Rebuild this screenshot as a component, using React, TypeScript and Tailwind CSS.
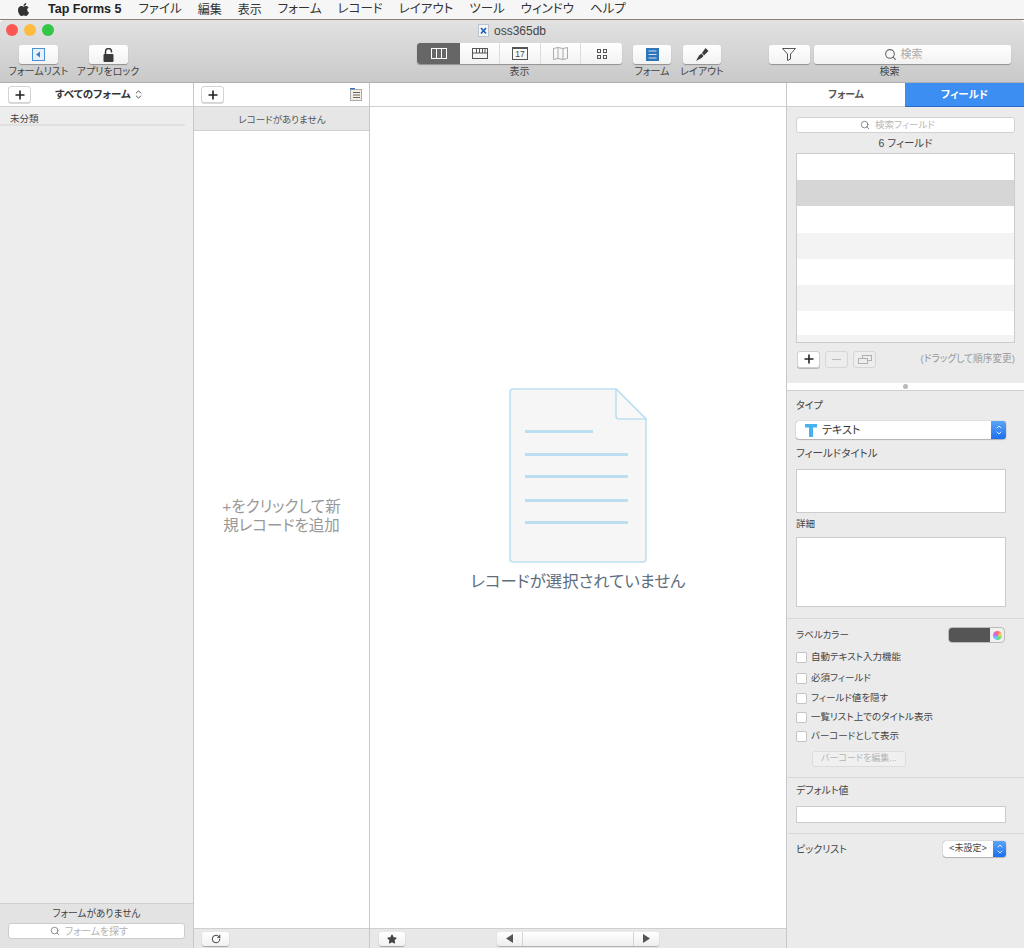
import React from "react";
import { FaApple, FaStar } from "react-icons/fa";
import { RotateCw, Search, ChevronsUpDown, ChevronUp, ChevronDown } from "lucide-react";

const font = "font-['Liberation_Sans','Noto_Sans_CJK_JP',sans-serif] [font-feature-settings:'palt']";

function Btn({ className = "", children }: { className?: string; children?: React.ReactNode }) {
  return (
    <div className={"flex items-center justify-center bg-gradient-to-b from-white to-[#f2f2f2] rounded-[3px] shadow-[0_1px_1px_rgba(0,0,0,0.3)] " + className}>
      {children}
    </div>
  );
}

function Plus({ c = "#222" }: { c?: string }) {
  return (
    <svg width="10" height="10" viewBox="0 0 10 10">
      <path d="M5 0.5V9.5M0.5 5H9.5" stroke={c} strokeWidth="1.6" />
    </svg>
  );
}

function Tool({ label, ml, w, children }: { label: string; ml: string; w: string; children: React.ReactNode }) {
  return (
    <div className={"flex flex-col items-center shrink-0 " + ml + " " + w}>
      <div className="h-[21px] flex items-end w-full justify-center">{children}</div>
      <div className="mt-[2px] text-[10px] leading-[12px] text-[#444] whitespace-nowrap">{label}</div>
    </div>
  );
}

function Seg({ w, active, children, last }: { w: string; active?: boolean; last?: boolean; children: React.ReactNode }) {
  return (
    <div className={"h-full flex items-center justify-center " + w + " " + (active ? "bg-[#666666]" : "") + " " + (last || active ? "" : "border-r border-[#dcdcdc]")}>
      {children}
    </div>
  );
}

function Check({ label, mt }: { label: string; mt: string }) {
  return (
    <div className={"flex items-center ml-[9px] h-[12px] " + mt}>
      <div className="w-[11px] h-[11px] bg-white rounded-[2px] border border-[#c4c4c4] shrink-0" />
      <span className="ml-[4px] text-[9.5px] text-[#444] whitespace-nowrap">{label}</span>
    </div>
  );
}

function Stepper({ w }: { w: string }) {
  return (
    <div className={"h-full flex flex-col items-center justify-center rounded-r-[3px] bg-gradient-to-b from-[#5aa5f8] to-[#1b6ff0] shrink-0 " + w}>
      <ChevronUp size={8} color="#fff" strokeWidth={2.5} className="-mb-[1px]" />
      <ChevronDown size={8} color="#fff" strokeWidth={2.5} className="-mt-[1px]" />
    </div>
  );
}

export default function App() {
  const menus = [
    { t: "ファイル", c: "" },
    { t: "編集", c: "text-[12px]" },
    { t: "表示", c: "text-[12px]" },
    { t: "フォーム", c: "" },
    { t: "レコード", c: "" },
    { t: "レイアウト", c: "" },
    { t: "ツール", c: "" },
    { t: "ウィンドウ", c: "" },
    { t: "ヘルプ", c: "" },
  ];
  return (
    <div className={"w-[1024px] h-[948px] overflow-hidden flex flex-col bg-white " + font}>
      {/* Menu bar */}
      <div className="h-[19px] bg-[#f6f6f6] flex items-center shrink-0 text-[12.5px] text-[#333]">
        <FaApple size={15} color="#333" className="ml-[16px] -mt-[1px]" />
        <span className="ml-[17px] font-bold text-[#222] text-[12.5px]">Tap Forms 5</span>
        <div className="flex items-center ml-[17px] gap-[16px]">
          {menus.map((m) => (
            <span key={m.t} className={"whitespace-nowrap " + m.c}>{m.t}</span>
          ))}
        </div>
      </div>
      <div className="h-px bg-[#8a7f78] shrink-0" />

      {/* Toolbar */}
      <div className="h-[63px] shrink-0 bg-gradient-to-b from-[#e2e2e2] to-[#c9c9c9] border-b border-[#b0b0b0] flex flex-col rounded-t-[4px]">
        <div className="h-[23px] relative flex justify-center shrink-0">
          <div className="absolute left-[6px] top-[4px] flex gap-[6px]">
            <div className="w-[12px] h-[12px] rounded-full bg-[#fc5753]" />
            <div className="w-[12px] h-[12px] rounded-full bg-[#fdbc40]" />
            <div className="w-[12px] h-[12px] rounded-full bg-[#33c748]" />
          </div>
          <div className="flex items-center h-[20px] pt-[1px]">
            <svg width="11" height="13" viewBox="0 0 11 13">
              <rect x="0.5" y="0.5" width="10" height="12" fill="#f4f6f8" stroke="#b9c4cf" />
              <path d="M3 4L8 9.5M8 4L3 9.5" stroke="#1e5fb4" strokeWidth="1.7" />
            </svg>
            <span className="ml-[5px] text-[12px] text-[#444]">oss365db</span>
          </div>
        </div>
        <div className="flex h-[36px]">
          <Tool label="フォームリスト" ml="ml-[4px]" w="w-[69px]">
            <Btn className="w-[39px] h-[19px]">
              <svg width="13" height="13" viewBox="0 0 13 13">
                <rect x="0.5" y="0.5" width="12" height="12" fill="#e6f1fb" stroke="#4a90d6" />
                <path d="M8 3.5V9.5L4 6.5Z" fill="#3e7fc4" />
              </svg>
            </Btn>
          </Tool>
          <Tool label="アプリをロック" ml="ml-[0px]" w="w-[70px]">
            <Btn className="w-[39px] h-[19px]">
              <svg width="11" height="14" viewBox="0 0 11 14">
                <path d="M2.5 6V3.5a3 3 0 0 1 6 0V4.5" fill="none" stroke="#3a3a3a" strokeWidth="1.5" />
                <rect x="0.5" y="6" width="10" height="8" rx="1" fill="#3a3a3a" />
              </svg>
            </Btn>
          </Tool>
          <Tool label="表示" ml="ml-[274px]" w="w-[205px]">
            <Btn className="w-[205px] h-[21px] overflow-hidden !justify-start">
              <Seg w="w-[43px]" active>
                <svg width="16" height="11" viewBox="0 0 16 11" fill="none" stroke="#fff" strokeWidth="1">
                  <rect x="0.5" y="0.5" width="15" height="10" />
                  <path d="M5.5 0.5V10.5M10.5 0.5V10.5" />
                </svg>
              </Seg>
              <Seg w="w-[40px]">
                <svg width="16" height="11" viewBox="0 0 16 11" fill="none" stroke="#555" strokeWidth="1">
                  <rect x="0.5" y="0.5" width="15" height="10" />
                  <path d="M0.5 5H4.5V0.5M4.5 5H15.5M7.5 0.5V5M10.5 0.5V5M13 0.5V5" />
                </svg>
              </Seg>
              <Seg w="w-[41px]">
                <div className="relative w-[16px] h-[13px] border border-[#555] border-t-2 flex items-center justify-center text-[8.5px] leading-none text-[#444]">17</div>
              </Seg>
              <Seg w="w-[40px]">
                <svg width="15" height="13" viewBox="0 0 15 13" fill="none" stroke="#aaa" strokeWidth="1">
                  <path d="M0.5 1.5L5 0.5L10 1.5L14.5 0.5V11.5L10 12.5L5 11.5L0.5 12.5Z" />
                  <path d="M5 0.5V11.5M10 1.5V12.5" />
                </svg>
              </Seg>
              <Seg w="w-[41px]" last>
                <svg width="10" height="10" viewBox="0 0 10 10" fill="none" stroke="#555" strokeWidth="1">
                  <rect x="0.5" y="0.5" width="3" height="3" />
                  <rect x="6.5" y="0.5" width="3" height="3" />
                  <rect x="0.5" y="6.5" width="3" height="3" />
                  <rect x="6.5" y="6.5" width="3" height="3" />
                </svg>
              </Seg>
            </Btn>
          </Tool>
          <Tool label="フォーム" ml="ml-[5px]" w="w-[50px]">
            <Btn className="w-[38px] h-[19px]">
              <svg width="13" height="13" viewBox="0 0 13 13">
                <rect width="13" height="13" fill="#2e74b9" />
                <path d="M2.5 3H10.5M2.5 6.5H10.5M2.5 10H10.5" stroke="#cfe3f5" strokeWidth="1" />
              </svg>
            </Btn>
          </Tool>
          <Tool label="レイアウト" ml="ml-[0px]" w="w-[50px]">
            <Btn className="w-[38px] h-[19px]">
              <svg width="14" height="15" viewBox="0 0 14 15">
                <path d="M1 14L4 8.5L6.5 6.5L8.5 9L6.5 11Z" fill="#3c3c3c" />
                <path d="M7 6L9 8.5L13.5 4L10.5 1Z" fill="#3c3c3c" />
              </svg>
            </Btn>
          </Tool>
          <Tool label="検索" ml="ml-[41px]" w="w-[243px]">
            <div className="flex gap-[4px] items-end">
              <Btn className="w-[41px] h-[19px]">
                <svg width="14" height="13" viewBox="0 0 14 13" fill="none" stroke="#555" strokeWidth="1">
                  <path d="M0.5 0.5H13.5L8.5 6V11L5.5 12.5V6Z" />
                </svg>
              </Btn>
              <Btn className="w-[197px] h-[19px] pr-[18px]">
                <Search size={13} color="#666" />
                <span className="ml-[4px] text-[11px] text-[#aaa]">検索</span>
              </Btn>
            </div>
          </Tool>
        </div>
      </div>

      {/* Body */}
      <div className="flex-1 flex min-h-0">
        {/* Forms column */}
        <div className="w-[194px] shrink-0 flex flex-col border-r border-[#c8c8c8] bg-[#ededed]">
          <div className="h-[24px] bg-white border-b border-[#d0d0d0] flex items-center shrink-0">
            <div className="ml-[8px] w-[23px] h-[17px] bg-white rounded-[3px] border border-[#d4d4d4] shadow-[0_1px_0_rgba(0,0,0,0.15)] flex items-center justify-center">
              <Plus />
            </div>
            <span className="ml-[24px] text-[10.5px] font-bold text-[#333] whitespace-nowrap">すべてのフォーム</span>
            <ChevronsUpDown size={11} color="#444" className="ml-[2px]" />
          </div>
          <div className="flex-1">
            <div className="pl-[10px] pt-[8px] h-[19px] mr-[8px] border-b-2 border-[#e0e0e0] flex items-center text-[9.5px] text-[#444]">未分類</div>
          </div>
          <div className="h-[45px] shrink-0 bg-[#e3e3e3] border-t border-[#cfcfcf] flex flex-col items-center">
            <div className="mt-[4px] text-[9.7px] leading-[12px] text-[#444]">フォームがありません</div>
            <div className="mt-[3px] w-[177px] h-[16px] bg-white rounded-[3px] border border-[#cdcdcd] flex items-center justify-center pr-[15px]">
              <Search size={10} color="#777" />
              <span className="ml-[5px] text-[10px] text-[#b4b4b4]">フォームを探す</span>
            </div>
          </div>
        </div>

        {/* Records column */}
        <div className="w-[176px] shrink-0 flex flex-col border-r border-[#c8c8c8] bg-white">
          <div className="h-[24px] border-b border-[#d0d0d0] flex items-center justify-between shrink-0 pl-[7px] pr-[7px]">
            <div className="w-[23px] h-[17px] bg-white rounded-[3px] border border-[#d4d4d4] shadow-[0_1px_0_rgba(0,0,0,0.15)] flex items-center justify-center">
              <Plus />
            </div>
            <svg width="12" height="13" viewBox="0 0 12 13" fill="none">
              <rect x="0.5" y="1.5" width="11" height="11" fill="#f3efe4" stroke="#aaa" />
              <path d="M0 0.5H5" stroke="#2d6fc4" strokeWidth="1.5" />
              <path d="M3 4.5H10M3 7H10M3 9.5H10" stroke="#666" />
            </svg>
          </div>
          <div className="h-[24px] pt-[3px] pl-[1px] shrink-0 bg-[#e6e6e6] border-b border-[#d0d0d0] flex items-center justify-center text-[9.5px] text-[#555]">
            レコードがありません
          </div>
          <div className="flex-1 flex items-center justify-center">
            <div className="w-[128px] text-center text-[15.5px] leading-[19px] text-[#999] mt-[-27px]">
              +をクリックして新規レコードを追加
            </div>
          </div>
          <div className="h-[20px] shrink-0 bg-[#e8e8e8] border-t border-[#cfcfcf] flex items-center pl-[8px]">
            <Btn className="w-[27px] h-[14px]">
              <RotateCw size={10} color="#333" strokeWidth={2.2} />
            </Btn>
          </div>
        </div>

        {/* Detail column */}
        <div className="w-[416px] shrink-0 flex flex-col bg-white">
          <div className="h-[24px] border-b border-[#d0d0d0] shrink-0" />
          <div className="flex-1 flex flex-col items-center">
            <svg width="138" height="176" viewBox="0 0 138 176" className="mt-[281px] shrink-0" fill="none">
              <path d="M4 1H107L137 31V171a3 3 0 0 1-3 3H4a3 3 0 0 1-3-3V4a3 3 0 0 1 3-3Z" fill="#f6f6f6" stroke="#bfe0f1" strokeWidth="1.6" />
              <path d="M107 1V28a3 3 0 0 0 3 3H137Z" fill="#f8f8f8" stroke="#bfe0f1" strokeWidth="1.6" />
              <path d="M16 43.5H84M16 66.5H119M16 88.5H119M16 112.5H119M16 134.5H119" stroke="#bbdff0" strokeWidth="3" />
            </svg>
            <div className="mt-[7px] text-[16.4px] leading-[20px] text-[#5e6e7e] whitespace-nowrap">レコードが選択されていません</div>
          </div>
          <div className="h-[20px] shrink-0 bg-[#e8e8e8] border-t border-[#cfcfcf] flex items-center pl-[9px]">
            <Btn className="w-[26px] h-[14px]">
              <FaStar size={10} color="#444" />
            </Btn>
            <div className="ml-[92px] w-[162px] h-[14px] flex items-center justify-between rounded-[3px] bg-gradient-to-b from-white to-[#eeeeee] shadow-[0_1px_1px_rgba(0,0,0,0.25)]">
              <div className="w-[26px] h-full flex items-center justify-center border-r border-[#d4d4d4]">
                <svg width="7" height="9" viewBox="0 0 7 9"><path d="M7 0V9L0 4.5Z" fill="#555" /></svg>
              </div>
              <div className="w-[26px] h-full flex items-center justify-center border-l border-[#d4d4d4]">
                <svg width="7" height="9" viewBox="0 0 7 9"><path d="M0 0V9L7 4.5Z" fill="#555" /></svg>
              </div>
            </div>
          </div>
        </div>

        {/* Inspector */}
        <div className="flex-1 flex flex-col border-l border-[#c8c8c8] bg-[#ebebeb] min-w-0">
          <div className="h-[24px] flex shrink-0">
            <div className="w-[118px] bg-white border-b border-[#d0d0d0] flex items-center justify-center text-[10px] font-bold text-[#555]">フォーム</div>
            <div className="flex-1 bg-[#3d8ef3] border-b border-[#2b6cc8] flex items-center justify-center text-[10.5px] font-bold text-white">フィールド</div>
          </div>

          <div className="mt-[10px] ml-[9px] mr-[9px] h-[16px] bg-white rounded-[3px] border border-[#d2d2d2] flex items-center justify-center shrink-0 pr-[16px]">
            <Search size={10} color="#777" />
            <span className="ml-[5px] text-[9.5px] text-[#b8b8b8]">検索フィールド</span>
          </div>
          <div className="mt-[4px] text-center text-[10.5px] leading-[12px] text-[#444] shrink-0">6 フィールド</div>
          <div className="mt-[4px] ml-[9px] mr-[9px] h-[190px] border border-[#cccccc] bg-white shrink-0 overflow-hidden">
            <div className="h-[26px] bg-white" />
            <div className="h-[26px] bg-[#d6d6d6]" />
            <div className="h-[27px] bg-white" />
            <div className="h-[26px] bg-[#f3f3f3]" />
            <div className="h-[26px] bg-white" />
            <div className="h-[26px] bg-[#f3f3f3]" />
            <div className="h-[24px] bg-white" />
            <div className="h-[7px] bg-[#f3f3f3]" />
          </div>
          <div className="mt-[7px] ml-[10px] mr-[9px] h-[18px] flex items-center shrink-0">
            <div className="w-[23px] h-[17px] bg-white rounded-[3px] border border-[#cfcfcf] shadow-[0_1px_0_rgba(0,0,0,0.2)] flex items-center justify-center">
              <Plus />
            </div>
            <div className="ml-[5px] w-[23px] h-[17px] bg-[#ededed] rounded-[3px] border border-[#d6d6d6] flex items-center justify-center">
              <div className="w-[9px] h-px bg-[#bbb]" />
            </div>
            <div className="ml-[5px] w-[23px] h-[17px] bg-[#ededed] rounded-[3px] border border-[#d6d6d6] flex items-center justify-center">
              <svg width="14" height="9" viewBox="0 0 14 9" fill="none" stroke="#b0b0b0">
                <rect x="4.5" y="0.5" width="9" height="5" />
                <rect x="0.5" y="3.5" width="9" height="5" fill="#ededed" />
              </svg>
            </div>
            <span className="ml-auto text-[9.7px] text-[#999] whitespace-nowrap">(ドラッグして順序変更)</span>
          </div>

          <div className="mt-[15px] h-[8px] bg-white border-b border-[#d0d0d0] flex items-center justify-center shrink-0">
            <div className="w-[5px] h-[5px] rounded-full bg-[#b8b8b8]" />
          </div>

          <div className="mt-[9px] ml-[9px] text-[10px] leading-[12px] text-[#444] shrink-0">タイプ</div>
          <div className="mt-[9px] ml-[9px] mr-[18px] h-[18px] flex bg-white rounded-[3px] shadow-[0_0_1px_rgba(0,0,0,0.5),0_1px_1px_rgba(0,0,0,0.2)] shrink-0">
            <div className="flex-1 flex items-center pl-[9px]">
              <svg width="12" height="13" viewBox="0 0 12 13">
                <path d="M0 0H12V3.5H8V13H4V3.5H0Z" fill="#45b4ee" />
              </svg>
              <span className="ml-[5px] text-[11px] text-[#333]">テキスト</span>
            </div>
            <Stepper w="w-[15px]" />
          </div>
          <div className="mt-[8px] ml-[9px] text-[10.5px] leading-[12px] text-[#444] shrink-0">フィールドタイトル</div>
          <div className="mt-[10px] ml-[9px] mr-[18px] h-[44px] bg-white border border-[#cccccc] shrink-0" />
          <div className="mt-[5px] ml-[9px] text-[9.5px] leading-[12px] text-[#444] shrink-0">詳細</div>
          <div className="mt-[7px] ml-[9px] mr-[18px] h-[70px] bg-white border border-[#cccccc] shrink-0" />

          <div className="mt-[11px] border-t border-[#d8d8d8] shrink-0 h-[159px] flex flex-col">
            <div className="mt-[8px] ml-[9px] mr-[19px] h-[16px] flex items-center justify-between">
              <span className="text-[9.5px] text-[#444]">ラベルカラー</span>
              <div className="w-[57px] h-[16px] rounded-[4px] border border-[#bbb] bg-[#f0f0f0] flex overflow-hidden">
                <div className="w-[41px] bg-[#555555]" />
                <div className="flex-1 flex items-center justify-center">
                  <div className="w-[9px] h-[9px] rounded-full bg-[conic-gradient(#f66,#fc6,#6d6,#6cf,#c6f,#f66)]" />
                </div>
              </div>
            </div>
            <Check label="自動テキスト入力機能" mt="mt-[8px]" />
            <Check label="必須フィールド" mt="mt-[9px]" />
            <Check label="フィールド値を隠す" mt="mt-[8px]" />
            <Check label="一覧リスト上でのタイトル表示" mt="mt-[7px]" />
            <Check label="バーコードとして表示" mt="mt-[7px]" />
            <div className="mt-[9px] ml-[25px] w-[94px] h-[16px] rounded-[3px] bg-[#f0f0f0] border border-[#dcdcdc] flex items-center justify-center text-[9px] text-[#b4b4b4]">バーコードを編集...</div>
          </div>

          <div className="border-t border-[#d8d8d8] shrink-0 h-[56px] flex flex-col">
            <div className="mt-[7px] ml-[9px] text-[10px] leading-[12px] text-[#444]">デフォルト値</div>
            <div className="mt-[9px] ml-[9px] w-[210px] h-[17px] bg-white border border-[#cccccc]" />
          </div>

          <div className="border-t border-[#d8d8d8] shrink-0 flex items-center justify-between ml-[1px] pt-[7px] pl-[8px] pr-[18px]">
            <span className="text-[10px] text-[#444]">ピックリスト</span>
            <div className="w-[63px] h-[16px] flex bg-white rounded-[3px] shadow-[0_0_1px_rgba(0,0,0,0.5),0_1px_1px_rgba(0,0,0,0.2)]">
              <div className="flex-1 flex items-center justify-center text-[9px] text-[#444] whitespace-nowrap">&lt;未設定&gt;</div>
              <Stepper w="w-[13px]" />
            </div>
          </div>
        </div>
      </div>
    </div>
  );
}
